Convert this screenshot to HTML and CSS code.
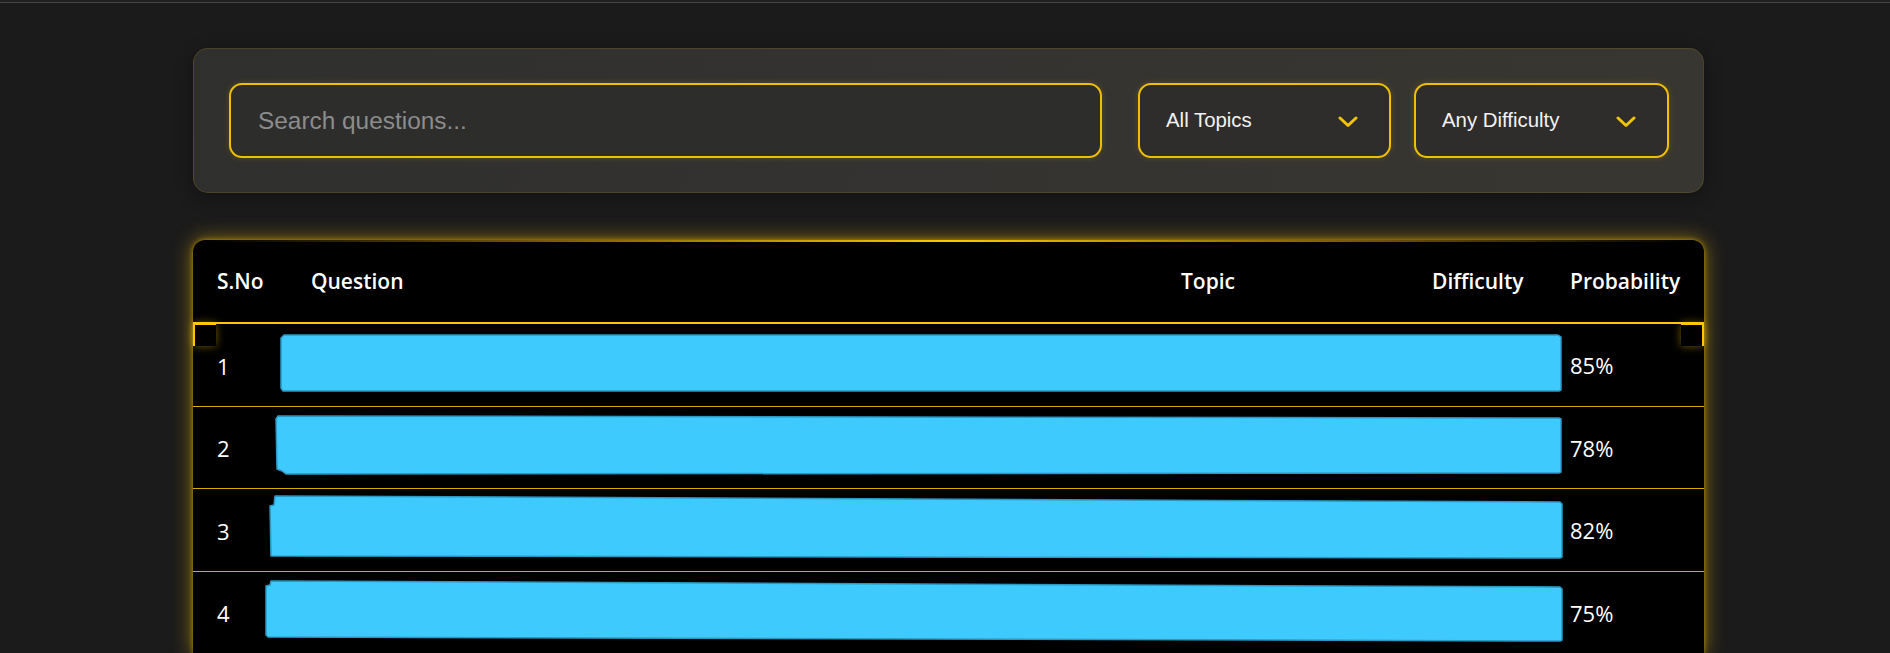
FILE: index.html
```html
<!DOCTYPE html>
<html lang="en">
<head>
<meta charset="utf-8">
<title>Questions</title>
<link rel="stylesheet" href="styles.css">
</head>
<body>
<div class="topline"></div>
<main class="wrap">
  <section class="filters">
    <input class="search" type="text" placeholder="Search questions...">
    <div class="select sel-topic">
      <span>All Topics</span>
      <svg class="chev" width="20" height="12" viewBox="0 0 20 12"><polyline points="2,2 10,9.5 18,2" fill="none" stroke="#f5c400" stroke-width="3" stroke-linecap="round" stroke-linejoin="round"/></svg>
    </div>
    <div class="select sel-diff">
      <span>Any Difficulty</span>
      <svg class="chev" width="20" height="12" viewBox="0 0 20 12"><polyline points="2,2 10,9.5 18,2" fill="none" stroke="#f5c400" stroke-width="3" stroke-linecap="round" stroke-linejoin="round"/></svg>
    </div>
  </section>

  <section class="table">
    <div class="row head">
      <div class="cell">S.No</div>
      <div class="cell">Question</div>
      <div class="cell">Topic</div>
      <div class="cell">Difficulty</div>
      <div class="cell prob">Probability</div>
    </div>
    <span class="corner corner-l"></span>
    <span class="corner corner-r"></span>

    <div class="row">
      <div class="cell">1</div>
      <div class="redact"><svg viewBox="0 0 1298 82" width="1298" height="82" preserveAspectRatio="none"><polygon points="19,11 1293,11 1296,13 1296,66 1294,67 18,67 16,64 16,14" /></svg></div>
      <div class="cell prob">85%</div>
    </div>
    <div class="row">
      <div class="cell">2</div>
      <div class="redact"><svg viewBox="0 0 1298 82" width="1298" height="82" preserveAspectRatio="none"><polygon points="13,9 1294,11 1296,12 1296,65 1294,66 21,67 17,64 12,62 11,12" /></svg></div>
      <div class="cell prob">78%</div>
    </div>
    <div class="row">
      <div class="cell">3</div>
      <div class="redact"><svg viewBox="0 0 1298 82" width="1298" height="82" preserveAspectRatio="none"><polygon points="10,7 1295,13 1297,15 1297,68 1295,69 6,67 5,17 9,16" /></svg></div>
      <div class="cell prob">82%</div>
    </div>
    <div class="row">
      <div class="cell">4</div>
      <div class="redact"><svg viewBox="0 0 1298 82" width="1298" height="82" preserveAspectRatio="none"><polygon points="6,9 1295,15 1297,17 1297,68 1295,69 3,65 1,63 1,14 5,13" /></svg></div>
      <div class="cell prob">75%</div>
    </div>
  </section>
</main>
</body>
</html>
```

FILE: styles.css
```css
* { box-sizing: border-box; }

html, body {
  margin: 0;
  padding: 0;
  background: #1b1b1b;
  overflow: hidden;
}

.topline {
  height: 3px;
  border-bottom: 1px solid #454545;
  background: #202020;
}

.wrap {
  width: 1511px;
  margin-left: 193px;
  padding-top: 45px;
  display: flex;
  flex-direction: column;
  gap: 47px;
}

/* ---------- filter panel ---------- */
.filters {
  display: flex;
  align-items: center;
  padding: 34px 34px 34px 35px;
  border: 1px solid rgba(255, 204, 0, 0.13);
  border-radius: 15px;
  background: linear-gradient(100deg, #2f2f2d 0%, #343331 50%, #383630 100%);
  box-shadow: 0 4px 18px rgba(0, 0, 0, 0.35);
  font-family: "Liberation Sans", Arial, sans-serif;
}

.search {
  width: 873px;
  height: 75px;
  margin: 0 36px 0 0;
  padding: 0 20px 0 27px;
  border: 2px solid #f0c000;
  border-radius: 13px;
  background: #2d2d2c;
  color: #e6e6e6;
  font-family: "Liberation Sans", Arial, sans-serif;
  font-size: 24.4px;
  outline: none;
  box-shadow: 0 0 6px rgba(255, 200, 0, 0.18);
}
.search::placeholder { color: #8c8c8c; }

.select {
  height: 75px;
  display: flex;
  align-items: center;
  justify-content: space-between;
  padding: 0 31px 0 26px;
  border: 2px solid #f0c000;
  border-radius: 13px;
  background: #2e2d2b;
  color: #f2f2f2;
  font-size: 20.4px;
  box-shadow: 0 0 6px rgba(255, 200, 0, 0.18);
}
.sel-topic { width: 253px; margin-right: 23px; }
.sel-diff { width: 255px; }
.chev { display: block; margin-top: 2px; }

/* ---------- table ---------- */
.table {
  position: relative;
  background: #000;
  border-radius: 12px 12px 0 0;
  box-shadow: 0 0 20px rgba(255, 196, 0, 0.55), 0 0 5px rgba(255, 200, 0, 0.55);
  font-family: "Open Sans", "Noto Sans", sans-serif;
  color: #fff;
}
.table::before {
  content: "";
  position: absolute;
  left: 12px;
  right: 12px;
  top: 0;
  height: 2px;
  background: linear-gradient(90deg, rgba(255, 200, 0, 0) 0%, #ffc800 50%, rgba(255, 200, 0, 0) 100%);
}

.row {
  display: grid;
  grid-template-columns: 94px 870px 251px 140px 156px;
  align-items: center;
  height: 82.5px;
  border-bottom: 1px solid #d9ad00;
}
.row.head {
  height: 84px;
  border-bottom: 2px solid #ffc800;
  font-weight: 600;
  font-size: 21px;
}
.row:not(.head) { font-size: 22px; }

.cell {
  padding: 0 24px;
  white-space: nowrap;
}
.row:not(.head) .cell:first-child { padding-top: 1px; }

.prob { grid-column: 5; padding-left: 22px; }

.redact {
  grid-column: 2 / 5;
  align-self: stretch;
  margin: 0 -15px 0 -22px;
}
.redact svg { display: block; width: 100%; height: 100%; }
.redact polygon {
  fill: #3ecafc;
  stroke: #2b98c2;
  stroke-width: 1.5;
  stroke-linejoin: round;
}

.corner {
  position: absolute;
  top: 83px;
  width: 23px;
  height: 23px;
  background: #000;
  border-top: 2px solid #ffc800;
  box-shadow: 0 0 9px rgba(255, 200, 0, 0.45);
}
.corner-l { left: 0; border-left: 2px solid #ffc800; }
.corner-r { right: 0; border-right: 2px solid #ffc800; }
```
